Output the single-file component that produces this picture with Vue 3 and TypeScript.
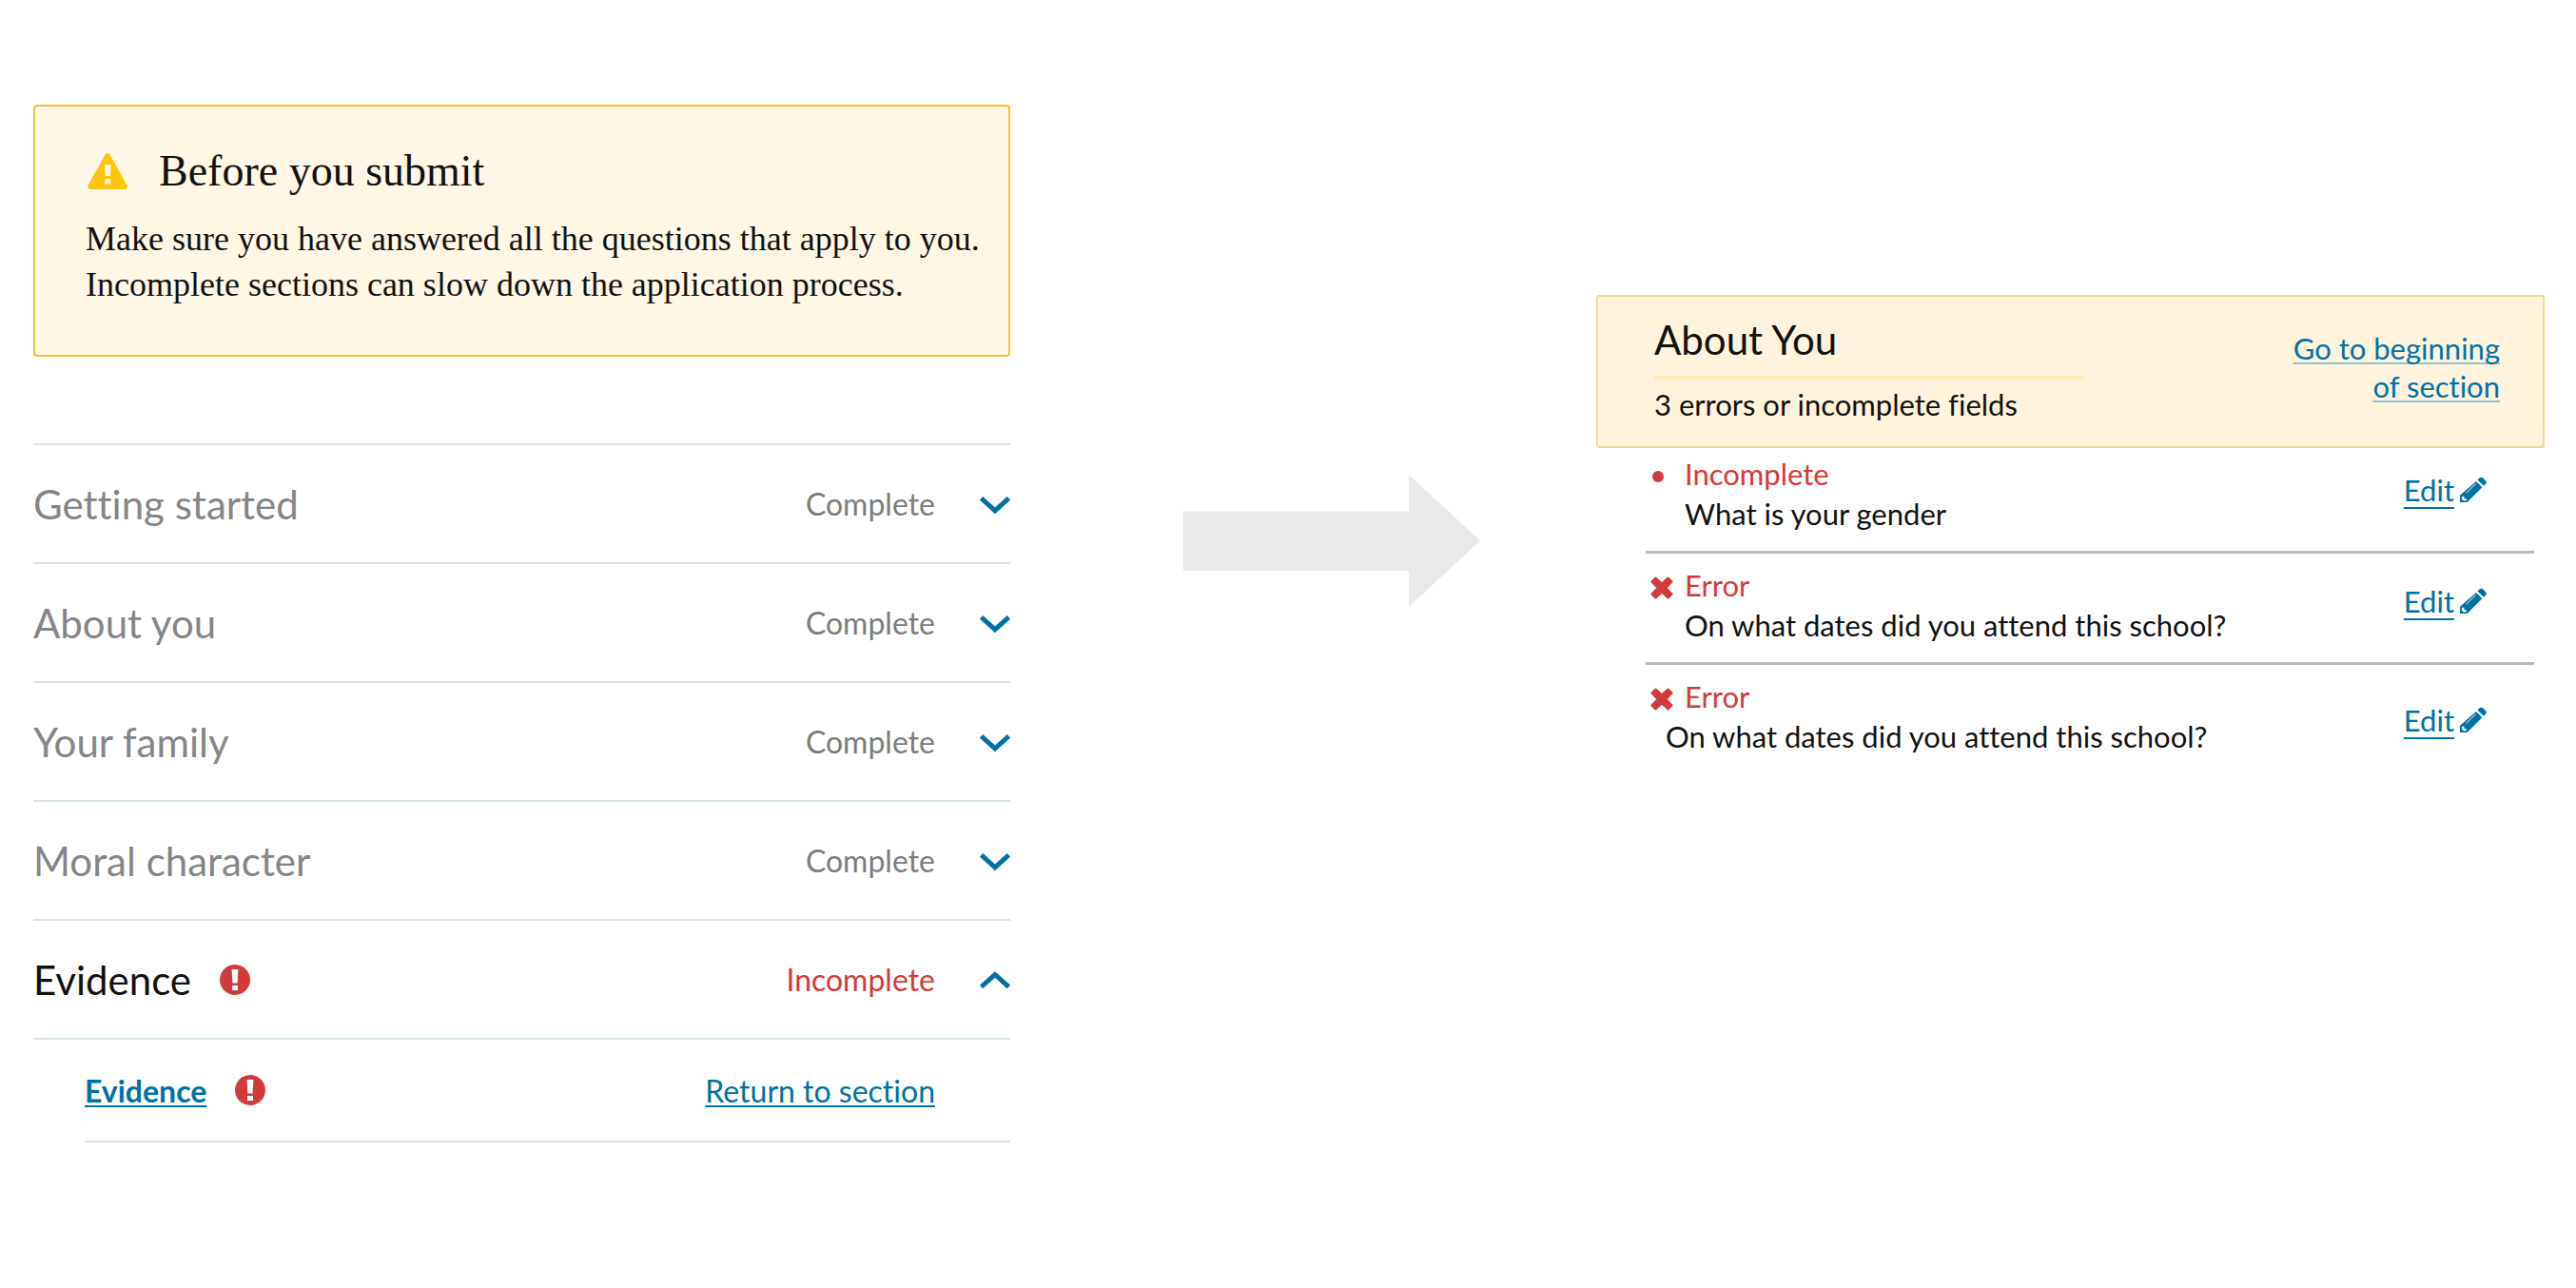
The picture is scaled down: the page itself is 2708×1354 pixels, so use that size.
<script setup lang="ts">
import { ref } from 'vue'

interface Section {
  name: string
  complete: boolean
}

interface Issue {
  kind: 'incomplete' | 'error'
  label: string
  question: string
}

const sections: Section[] = [
  { name: 'Getting started', complete: true },
  { name: 'About you', complete: true },
  { name: 'Your family', complete: true },
  { name: 'Moral character', complete: true },
  { name: 'Evidence', complete: false },
]

const issues: Issue[] = [
  { kind: 'incomplete', label: 'Incomplete', question: 'What is your gender' },
  { kind: 'error', label: 'Error', question: 'On what dates did you attend this school?' },
  { kind: 'error', label: 'Error', question: 'On what dates did you attend this school?' },
]

const openSection = ref<string>('Evidence')

function toggle(name: string): void {
  openSection.value = openSection.value === name ? '' : name
}
</script>

<template>
  <main class="page">
    <section class="review">
      <div class="notice">
        <div class="notice-head">
          <svg class="warning" viewBox="0 0 42 38" aria-hidden="true">
            <path fill="#ffc40c" d="M18.6 1.4Q21-1.4 23.4 1.4L41.4 33.6Q42.8 37.4 39 38H3Q-.8 37.4.6 33.6Z" />
            <path fill="#fff7e6" d="M18 12h6.600l-.6 12h-5.400zM18.400 27h5.800v5.400h-5.800z" />
          </svg>
          <h2>Before you submit</h2>
        </div>
        <p>
          Make sure you have answered all the questions that apply to you.
          Incomplete sections can slow down the application process.
        </p>
      </div>

      <ul class="sections">
        <li v-for="section in sections" :key="section.name">
          <button
            type="button"
            class="section-row"
            :class="{ pending: !section.complete }"
            :aria-expanded="openSection === section.name"
            @click="toggle(section.name)"
          >
            <span class="section-name">{{ section.name }}</span>
            <svg v-if="!section.complete" class="alert" viewBox="0 0 32 32" aria-hidden="true">
              <circle cx="16" cy="16" r="16" fill="#d23b3b" />
              <path fill="#fff" d="M12.600 5h6.800l-.8 14.600h-5.200zM13 22h6v5h-6z" />
            </svg>
            <span class="status">{{ section.complete ? 'Complete' : 'Incomplete' }}</span>
            <svg class="chevron" viewBox="0 0 32 24" aria-hidden="true">
              <path v-if="openSection === section.name" d="M1.600 19.500 16 6.500 30.400 19.500" />
              <path v-else d="M1.600 5.800 16 18.800 30.400 5.800" />
            </svg>
          </button>
          <div v-if="openSection === section.name" class="sub">
            <div class="sub-row">
              <a href="#evidence" class="sub-name">{{ section.name }}</a>
              <svg class="alert" viewBox="0 0 32 32" aria-hidden="true">
                <circle cx="16" cy="16" r="16" fill="#d23b3b" />
                <path fill="#fff" d="M12.600 5h6.800l-.8 14.600h-5.200zM13 22h6v5h-6z" />
              </svg>
              <a href="#section" class="return">Return to section</a>
            </div>
          </div>
        </li>
      </ul>
    </section>

    <svg class="arrow" viewBox="0 0 312 139" aria-hidden="true">
      <path fill="#e8e9ea" d="M0 38.500H237V0L312 69.500 237 139V101H0Z" />
    </svg>

    <section class="errors">
      <header class="panel">
        <div class="panel-text">
          <h2>About You</h2>
          <p>3 errors or incomplete fields</p>
        </div>
        <a href="#beginning" class="begin">Go to beginning of section</a>
      </header>
      <ul class="issues">
        <li v-for="(issue, index) in issues" :key="index" class="issue">
          <span class="mark">
            <svg v-if="issue.kind === 'error'" class="cross" viewBox="0 0 24 24" aria-hidden="true">
              <path d="M5.500 2 12 8.200 18.500 2 22 5.500 15.800 12 22 18.500 18.500 22 12 15.800 5.500 22 2 18.500 8.200 12 2 5.500Z" />
            </svg>
            <span v-else class="dot"></span>
          </span>
          <div class="issue-text">
            <p class="kind">{{ issue.label }}</p>
            <p class="question">{{ issue.question }}</p>
          </div>
          <a href="#edit" class="edit">
            <span>Edit</span>
            <svg class="pencil" viewBox="0 0 28 28" aria-hidden="true">
              <path fill="#0071a5" d="M20.400 1.600Q22.200-.2 24.200 1.400L27 4.200Q28.600 6 27 7.800L25 9.800 18.400 3.400Z" />
              <path fill="#0071a5" d="M17 5 23.400 11.200 7.600 27H0V19.800Z" />
              <path fill="none" stroke="#9fcbdc" stroke-width="1.200" d="M6.500 17.200 16.500 7.600" />
              <path fill="#fff" d="M2.200 20.800 4.400 20.600V23H6.800L6.600 25.200 4 25.600 1.800 23.400Z" />
            </svg>
          </a>
        </li>
      </ul>
    </section>
  </main>
</template>

<style>
body {
  background: #fff;
}
</style>

<style scoped>
.page {
  display: grid;
  grid-template-columns: 1027fr 182fr 312fr 122fr 997fr;
  align-items: start;
  padding: 110px 33px 80px 35px;
  font-family: Lato, "Liberation Sans", sans-serif;
  font-size: 32px;
  font-variant-ligatures: none;
  color: #111;
}

h2,
p,
ul {
  margin: 0;
  padding: 0;
  font-weight: 400;
}

ul {
  list-style: none;
}

a {
  color: #0071a5;
}

svg {
  display: block;
  flex: none;
}

.notice {
  padding: 41px 10px 50px 53px;
  border: 2px solid #eac432;
  border-radius: 4px;
  background: #fff7e6;
  font-family: Georgia, "Liberation Serif", serif;
}

.notice-head {
  display: flex;
  align-items: center;
  gap: 33px;
  margin-bottom: 20px;
  padding-left: 2px;
}

.notice-head h2 {
  font-size: 46px;
  line-height: 54px;
}

.warning {
  width: 42px;
  height: 38px;
}

.notice p {
  font-size: 36px;
  line-height: 48px;
}

.sections {
  margin-top: 91px;
}

.section-row {
  display: flex;
  align-items: center;
  box-sizing: border-box;
  width: 100%;
  height: 125px;
  padding: 0;
  border: 0;
  border-top: 2px solid #d5e4ea;
  background: none;
  font: inherit;
  font-variant-ligatures: none;
  color: #858585;
  text-align: left;
}

.section-name {
  font-size: 42px;
}

.section-row.pending .section-name {
  color: #111;
}

.alert {
  width: 32px;
  height: 32px;
  margin-left: 30px;
}

.status {
  margin-left: auto;
  color: #7c7c7c;
}

.pending .status {
  color: #d23b3b;
}

.chevron {
  width: 32px;
  height: 24px;
  margin-left: 47px;
  fill: none;
  stroke: #0071a5;
  stroke-width: 5;
}

.sub {
  padding-left: 54px;
  border-top: 2px solid #d5e4ea;
}

.sub-row {
  display: flex;
  align-items: center;
  height: 106px;
  padding-right: 79px;
  border-bottom: 2px solid #d5e4ea;
}

.sub-name {
  font-weight: 700;
}

.sub-name,
.return {
  text-decoration-thickness: 2px;
  text-underline-offset: 3px;
}

.return {
  margin-left: auto;
}

.arrow {
  grid-column: 3;
  width: 100%;
  margin-top: 389px;
}

.errors {
  grid-column: 5;
  margin-top: 200px;
  font-size: 31px;
}

.panel {
  display: flex;
  justify-content: space-between;
  align-items: flex-start;
  padding: 21px 45px 26px 59px;
  border: 2px solid #eed995;
  border-radius: 3px;
  background: #fff3dd;
}

.panel-text {
  width: 51%;
}

.panel h2 {
  padding-bottom: 14px;
  border-bottom: 4px solid #ffedb9;
  font-size: 42px;
  line-height: 48px;
}

.panel p {
  margin-top: 8px;
  line-height: 36px;
}

.begin {
  max-width: 240px;
  margin-top: 13px;
  line-height: 40px;
  text-align: right;
  text-decoration-color: #8fbfce;
  text-decoration-thickness: 2px;
  text-decoration-skip-ink: none;
  text-underline-offset: 3px;
}

.issues {
  margin: -6px 11px 0 52px;
}

.issue {
  display: flex;
  align-items: stretch;
  padding: 12px 50px 18px 0;
  border-bottom: 3px solid #b9b9b9;
}

.issue:last-child {
  border-bottom: 0;
}

.issue:last-child .question {
  margin-left: -20px;
}

.mark {
  display: flex;
  align-items: center;
  flex: none;
  width: 36px;
  height: 48px;
  padding-left: 5px;
}

.cross {
  width: 24px;
  height: 24px;
  fill: #d23b3b;
  stroke: #d23b3b;
  stroke-width: 3;
  stroke-linejoin: round;
}

.dot {
  width: 12px;
  height: 12px;
  margin-left: 2px;
  border-radius: 50%;
  background: #d23b3b;
}

.issue-text {
  flex: 1;
  line-height: 42px;
}

.kind {
  color: #d23b3b;
}

.edit {
  display: flex;
  align-items: center;
  gap: 6px;
  padding-bottom: 8px;
  text-decoration: none;
}

.issue:last-child .edit {
  padding: 8px 0 0;
}

.edit span {
  line-height: 42px;
  text-decoration: underline 2px;
  text-underline-offset: 6px;
}

.pencil {
  width: 28px;
  height: 28px;
}
</style>
